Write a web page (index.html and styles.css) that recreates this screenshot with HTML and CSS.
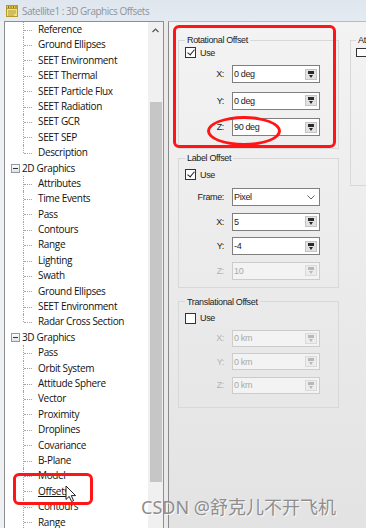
FILE: index.html
```html
<!DOCTYPE html>
<html lang="en">
<head>
    <meta charset="UTF-8">
    <meta name="viewport" content="width=device-width, initial-scale=1.0">
    <title>Satellite1 : 3D Graphics Offsets</title>
    <link rel="stylesheet" href="styles.css">
</head>
<body>
    <header class="titlebar">
        <svg class="app-icon" width="12" height="12" viewBox="0 0 12 12">
            <rect x="0.5" y="0.5" width="11" height="11" fill="#f3e27a" stroke="#b59b2a"/>
            <rect x="0.5" y="0.5" width="11" height="3" fill="#e8c94a" stroke="#b59b2a"/>
            <path d="M2.5 1v2M5 1v2M7.5 1v2M10 1v2" stroke="#6b5a10" stroke-width="0.8"/>
            <path d="M2 6h8M2 8h8M2 10h6" stroke="#9a8530" stroke-width="0.8"/>
        </svg>
        <span class="title">Satellite1 : 3D Graphics Offsets</span>
    </header>

    <div class="main">
        <aside class="tree-pane">
            <ul class="tree">
                <li class="leaf">Reference</li>
                <li class="leaf">Ground Ellipses</li>
                <li class="leaf">SEET Environment</li>
                <li class="leaf">SEET Thermal</li>
                <li class="leaf">SEET Particle Flux</li>
                <li class="leaf">SEET Radiation</li>
                <li class="leaf">SEET GCR</li>
                <li class="leaf">SEET SEP</li>
                <li class="leaf last">Description</li>
                <li class="branch"><span class="toggle"></span>2D Graphics</li>
                <li class="leaf">Attributes</li>
                <li class="leaf">Time Events</li>
                <li class="leaf">Pass</li>
                <li class="leaf">Contours</li>
                <li class="leaf">Range</li>
                <li class="leaf">Lighting</li>
                <li class="leaf">Swath</li>
                <li class="leaf">Ground Ellipses</li>
                <li class="leaf">SEET Environment</li>
                <li class="leaf last">Radar Cross Section</li>
                <li class="branch"><span class="toggle"></span>3D Graphics</li>
                <li class="leaf">Pass</li>
                <li class="leaf">Orbit System</li>
                <li class="leaf">Attitude Sphere</li>
                <li class="leaf">Vector</li>
                <li class="leaf">Proximity</li>
                <li class="leaf">Droplines</li>
                <li class="leaf">Covariance</li>
                <li class="leaf">B-Plane</li>
                <li class="leaf">Model</li>
                <li class="leaf"><span class="hot">Offsets</span></li>
                <li class="leaf">Contours</li>
                <li class="leaf">Range</li>
            </ul>
            <div class="scrollbar">
                <svg class="scroll-up" width="7" height="5" viewBox="0 0 7 5">
                    <path d="M0.5 4 L3.5 1 L6.5 4" fill="none" stroke="#555" stroke-width="1.2"/>
                </svg>
                <div class="thumb"></div>
            </div>
        </aside>

        <div class="splitter"></div>

        <section class="content">
            <div class="col">
                <fieldset class="group group-rot">
                    <legend>Rotational Offset</legend>
                    <label class="use"><span class="check on"></span>Use</label>
                    <div class="fields">
                        <span class="lbl">X:</span>
                        <div class="field"><span class="val">0 deg</span><span class="unit-btn"></span></div>
                        <span class="lbl">Y:</span>
                        <div class="field"><span class="val">0 deg</span><span class="unit-btn"></span></div>
                        <span class="lbl">Z:</span>
                        <div class="field"><span class="val">90 deg</span><span class="unit-btn"></span></div>
                    </div>
                </fieldset>

                <fieldset class="group group-label">
                    <legend>Label Offset</legend>
                    <label class="use"><span class="check on"></span>Use</label>
                    <div class="fields">
                        <span class="lbl">Frame:</span>
                        <div class="field combo"><span class="val">Pixel</span>
                            <svg width="8" height="5" viewBox="0 0 8 5"><path d="M0.5 0.5 L4 4 L7.5 0.5" fill="none" stroke="#666" stroke-width="1"/></svg>
                        </div>
                        <span class="lbl">X:</span>
                        <div class="field"><span class="val">5</span><span class="unit-btn"></span></div>
                        <span class="lbl">Y:</span>
                        <div class="field"><span class="val">-4</span><span class="unit-btn"></span></div>
                        <span class="lbl off">Z:</span>
                        <div class="field off"><span class="val">10</span><span class="unit-btn"></span></div>
                    </div>
                </fieldset>

                <fieldset class="group group-trans">
                    <legend>Translational Offset</legend>
                    <label class="use"><span class="check"></span>Use</label>
                    <div class="fields">
                        <span class="lbl off">X:</span>
                        <div class="field off"><span class="val">0 km</span><span class="unit-btn"></span></div>
                        <span class="lbl off">Y:</span>
                        <div class="field off"><span class="val">0 km</span><span class="unit-btn"></span></div>
                        <span class="lbl off">Z:</span>
                        <div class="field off"><span class="val">0 km</span><span class="unit-btn"></span></div>
                    </div>
                </fieldset>
            </div>

            <fieldset class="group group-att">
                <legend>Att</legend>
                <label class="use"><span class="check"></span></label>
            </fieldset>
        </section>
    </div>

    <!-- annotations drawn over the screenshot -->
    <div class="mark mark-rot"></div>
    <div class="mark mark-z"></div>
    <div class="mark mark-tree"></div>
    <svg class="pointer" width="12" height="18" viewBox="0 0 12 18">
        <path d="M1 1 L1 14.5 L4.2 11.4 L6.6 16.6 L8.6 15.7 L6.3 10.6 L10.6 10.6 Z" fill="#fff" stroke="#222" stroke-width="1"/>
    </svg>
    <div class="watermark">CSDN @舒克儿不开飞机</div>
</body>
</html>
```

FILE: styles.css
```css
body {
    margin: 0;
    width: 366px;
    height: 528px;
    overflow: hidden;
    position: relative;
    background-color: #eef0f2;
    font-family: "Open Sans", "Noto Sans", sans-serif;
    color: #111;
}

.titlebar {
    height: 21px;
    display: flex;
    align-items: center;
    padding-left: 6px;
    box-sizing: border-box;
    background: linear-gradient(#dfe6ee, #e4eaf1);
}

.app-icon {
    flex: none;
    margin-right: 4px;
}

.title {
    font-size: 10px;
    letter-spacing: -0.5px;
    color: #8f949a;
}

.main {
    display: flex;
    height: 507px;
}

/* left tree */
.tree-pane {
    flex: none;
    width: 160px;
    margin-left: 4px;
    border: 1px solid #8d8f93;
    border-bottom: 0;
    background: #fff;
    display: flex;
    box-sizing: border-box;
    overflow: hidden;
}

.tree {
    list-style: none;
    margin: 0;
    padding: 0;
    flex: 1;
    min-width: 0;
    font-size: 10px;
    letter-spacing: -0.35px;
}

.tree li {
    height: 15.4px;
    line-height: 15.4px;
    position: relative;
    white-space: nowrap;
}

.tree .leaf {
    padding-left: 33px;
}

.tree .leaf::before {
    content: "";
    position: absolute;
    left: 18px;
    top: 0;
    height: 100%;
    border-left: 1px dotted #a5a5a5;
}

.tree .leaf.last::before {
    height: 50%;
}

.tree .leaf::after {
    content: "";
    position: absolute;
    left: 19px;
    top: 50%;
    width: 8px;
    border-top: 1px dotted #a5a5a5;
}

.tree .branch {
    padding-left: 17px;
}

.toggle {
    position: absolute;
    left: 6px;
    top: 3.5px;
    width: 9px;
    height: 9px;
    box-sizing: border-box;
    border: 1px solid #8e9aa6;
    background: linear-gradient(#fdfdfd, #dfe3e8);
}

.toggle::after {
    content: "";
    position: absolute;
    left: 1px;
    right: 1px;
    top: 3px;
    height: 1px;
    background: #333;
}

.hot {
    text-decoration: underline;
}

.scrollbar {
    width: 15px;
    flex: none;
    background: #f0f0f0;
    display: flex;
    flex-direction: column;
    align-items: center;
}

.scroll-up {
    margin-top: 6px;
}

.thumb {
    margin-top: 69px;
    width: 12px;
    height: 380px;
    margin-left: 1px;
    background: #c6c6c6;
}

.splitter {
    flex: none;
    width: 4px;
    background: #eaeaea;
}

/* right panel */
.content {
    flex: 1;
    display: flex;
    align-items: flex-start;
    padding-left: 9px;
    border-left: 1px solid #8a8a8a;
    border-top: 1px solid #b8bcc2;
    background: linear-gradient(#f3f3f3, #e3e3e3);
    font-family: "Liberation Sans", Arial, sans-serif;
    font-size: 9px;
    letter-spacing: -0.35px;
    color: #222;
    overflow: hidden;
}

.col {
    width: 161px;
    flex: none;
}

.group {
    margin: 0;
    padding: 0 6px;
    border: 1px solid #d8d8d8;
    min-width: 0;
}

.group legend {
    padding: 0 2px;
    margin-left: 0;
    line-height: 12px;
}

.use {
    display: flex;
    align-items: center;
    height: 11px;
    gap: 4px;
}

.check {
    width: 11px;
    height: 11px;
    box-sizing: border-box;
    border: 1px solid #333;
    background: #fff;
    position: relative;
}

.check.on::after {
    content: "";
    position: absolute;
    left: 3px;
    top: 0px;
    width: 3px;
    height: 6px;
    border: solid #222;
    border-width: 0 1px 1px 0;
    transform: rotate(40deg);
}

.fields {
    display: grid;
    grid-template-columns: 39px 88px;
    column-gap: 8px;
    align-items: center;
}

.lbl {
    text-align: right;
}

.lbl.off {
    color: #b3b3b3;
}

.field {
    height: 18px;
    box-sizing: border-box;
    border: 1px solid #7f7f7f;
    background: #fff;
    display: flex;
    align-items: center;
    padding: 0 2px 0 1px;
}

.field .val {
    flex: 1;
}

.field.off {
    border-color: #cccccc;
    background: #f3f3f3;
    color: #a8a8a8;
}

.combo svg {
    margin-right: 2px;
}

.unit-btn {
    width: 12px;
    height: 11px;
    box-sizing: border-box;
    border: 1px solid #c4c4c4;
    background: #e2e2e2;
    position: relative;
}

.unit-btn::before {
    content: "";
    position: absolute;
    left: 2px;
    top: 1px;
    width: 6px;
    height: 3px;
    background: #2a2a2a;
}

.unit-btn::after {
    content: "";
    position: absolute;
    left: 3px;
    top: 5px;
    border-left: 2.5px solid transparent;
    border-right: 2.5px solid transparent;
    border-top: 3px solid #2a2a2a;
}

.field.off .unit-btn {
    border-color: #dadada;
    background: #ececec;
}

.field.off .unit-btn::before {
    background: #b8b8b8;
}

.field.off .unit-btn::after {
    border-top-color: #b8b8b8;
}

/* per-group spacing */
.group-rot {
    margin-top: 12px;
    padding-bottom: 12px;
}

.group-rot .use {
    margin-top: 1px;
}

.group-rot .fields {
    margin-top: 7px;
    row-gap: 8.5px;
}

.group-label {
    margin-top: 3px;
    padding-bottom: 7px;
}

.group-label .use {
    margin-top: 5px;
}

.group-label .fields {
    margin-top: 8px;
    row-gap: 6.5px;
}

.group-trans {
    margin-top: 8px;
    padding-bottom: 13px;
}

.group-trans .use {
    margin-top: 5px;
}

.group-trans .fields {
    margin-top: 6px;
    row-gap: 6.5px;
}

.group-trans .field {
    height: 17px;
}

.group-att {
    flex: none;
    margin-top: 12px;
    margin-left: 11px;
    width: 60px;
    height: 152px;
    box-sizing: border-box;
    padding-left: 5px;
}

.group-att .use {
    margin-top: 1px;
}

.group-att .check {
    width: 14px;
    height: 9px;
}

/* red annotations */
.mark {
    position: absolute;
    border: 3px solid #ff1515;
    box-sizing: border-box;
}

.mark-rot {
    left: 173px;
    top: 25px;
    width: 163px;
    height: 123px;
    border-radius: 6px;
}

.mark-z {
    left: 207px;
    top: 116px;
    width: 74px;
    height: 30px;
    border-radius: 50%;
}

.mark-tree {
    left: 13px;
    top: 473px;
    width: 80px;
    height: 32px;
    border-radius: 6px;
}

.pointer {
    position: absolute;
    left: 65px;
    top: 485px;
}

.watermark {
    position: absolute;
    left: 141px;
    top: 495px;
    font-family: "Noto Sans", "Noto Sans CJK SC", sans-serif;
    font-size: 18px;
    line-height: 24px;
    color: #8e8e8e;
    text-shadow: 1px 1px 0 rgba(255, 255, 255, 0.8);
    white-space: nowrap;
}
```
